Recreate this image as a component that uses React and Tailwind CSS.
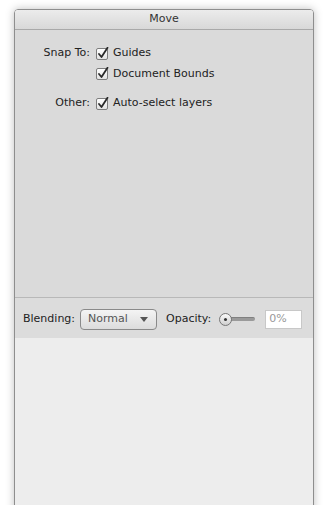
import React from "react";

const font = { fontFamily: '"Lucida Grande", "DejaVu Sans", sans-serif' };

function Check() {
  return (
    <svg width="13" height="13" viewBox="0 0 13 13" className="shrink-0">
      <defs>
        <linearGradient id="cb" x1="0" y1="0" x2="0" y2="1">
          <stop offset="0" stopColor="#ffffff" />
          <stop offset="1" stopColor="#e2e2e2" />
        </linearGradient>
      </defs>
      <rect x="0.5" y="1.5" width="11" height="11" rx="1.5" fill="url(#cb)" stroke="#7d7d7d" />
      <path d="M3 7 L5.5 10 L11.5 0.8" fill="none" stroke="#2a2a2a" strokeWidth="1.8" strokeLinecap="round" strokeLinejoin="round" />
    </svg>
  );
}

function CheckRow({ label }) {
  return (
    <div className="flex items-center gap-[4px]">
      <Check />
      <span>{label}</span>
    </div>
  );
}

export default function App() {
  return (
    <div className="w-[328px] h-[505px] bg-white overflow-hidden pt-[9px] px-[14px]" style={font}>
      <div className="h-[520px] flex flex-col border border-[#8e8e8e] rounded-t-[4px] shadow-[0_0_8px_rgba(0,0,0,0.25)] overflow-hidden text-[11px] text-[#222]">
        <div className="h-[20px] shrink-0 flex items-center justify-center bg-gradient-to-b from-[#ececec] to-[#d8d8d8] border-b border-[#a9a9a9] text-[#333]">
          Move
        </div>
        <div className="h-[268px] shrink-0 bg-[#dadada] border-b border-[#b8b8b8] pt-[15px]">
          <div className="grid grid-cols-[75px_auto] gap-x-[6px] items-center">
            <div className="text-right">Snap To:</div>
            <CheckRow label="Guides" />
            <div />
            <div className="mt-[4px]"><CheckRow label="Document Bounds" /></div>
            <div className="text-right mt-[13px]">Other:</div>
            <div className="mt-[13px]"><CheckRow label="Auto-select layers" /></div>
          </div>
        </div>
        <div className="h-[40px] shrink-0 bg-[#dcdcdc] flex items-center pl-[8px] pt-[2px]">
          <span>Blending:</span>
          <div className="ml-[5px] w-[77px] h-[21px] rounded-[4px] border border-[#8a8a8a] bg-gradient-to-b from-[#f4f4f4] to-[#dcdcdc] flex items-center justify-between pl-[7px] pr-[8px] text-[#555]">
            <span>Normal</span>
            <svg width="8" height="5" viewBox="0 0 8 5"><path d="M0 0 H8 L4 5 Z" fill="#555" /></svg>
          </div>
          <span className="ml-[9px]">Opacity:</span>
          <div className="ml-[8px] flex items-center">
            <div className="w-[13px] h-[13px] rounded-full border border-[#777] bg-gradient-to-b from-[#fafafa] to-[#cfcfcf] flex items-center justify-center relative z-10">
              <div className="w-[3px] h-[3px] rounded-full bg-[#333]" />
            </div>
            <div className="w-[25px] h-[4px] -ml-[2px] rounded-r-full bg-[#9a9a9a] border-t border-[#808080]" />
          </div>
          <div className="ml-[10px] w-[37px] h-[19px] bg-white border border-[#c8c8c8] flex items-center pl-[3px] text-[#999]">0%</div>
        </div>
        <div className="flex-1 bg-[#ededed]" />
      </div>
    </div>
  );
}
